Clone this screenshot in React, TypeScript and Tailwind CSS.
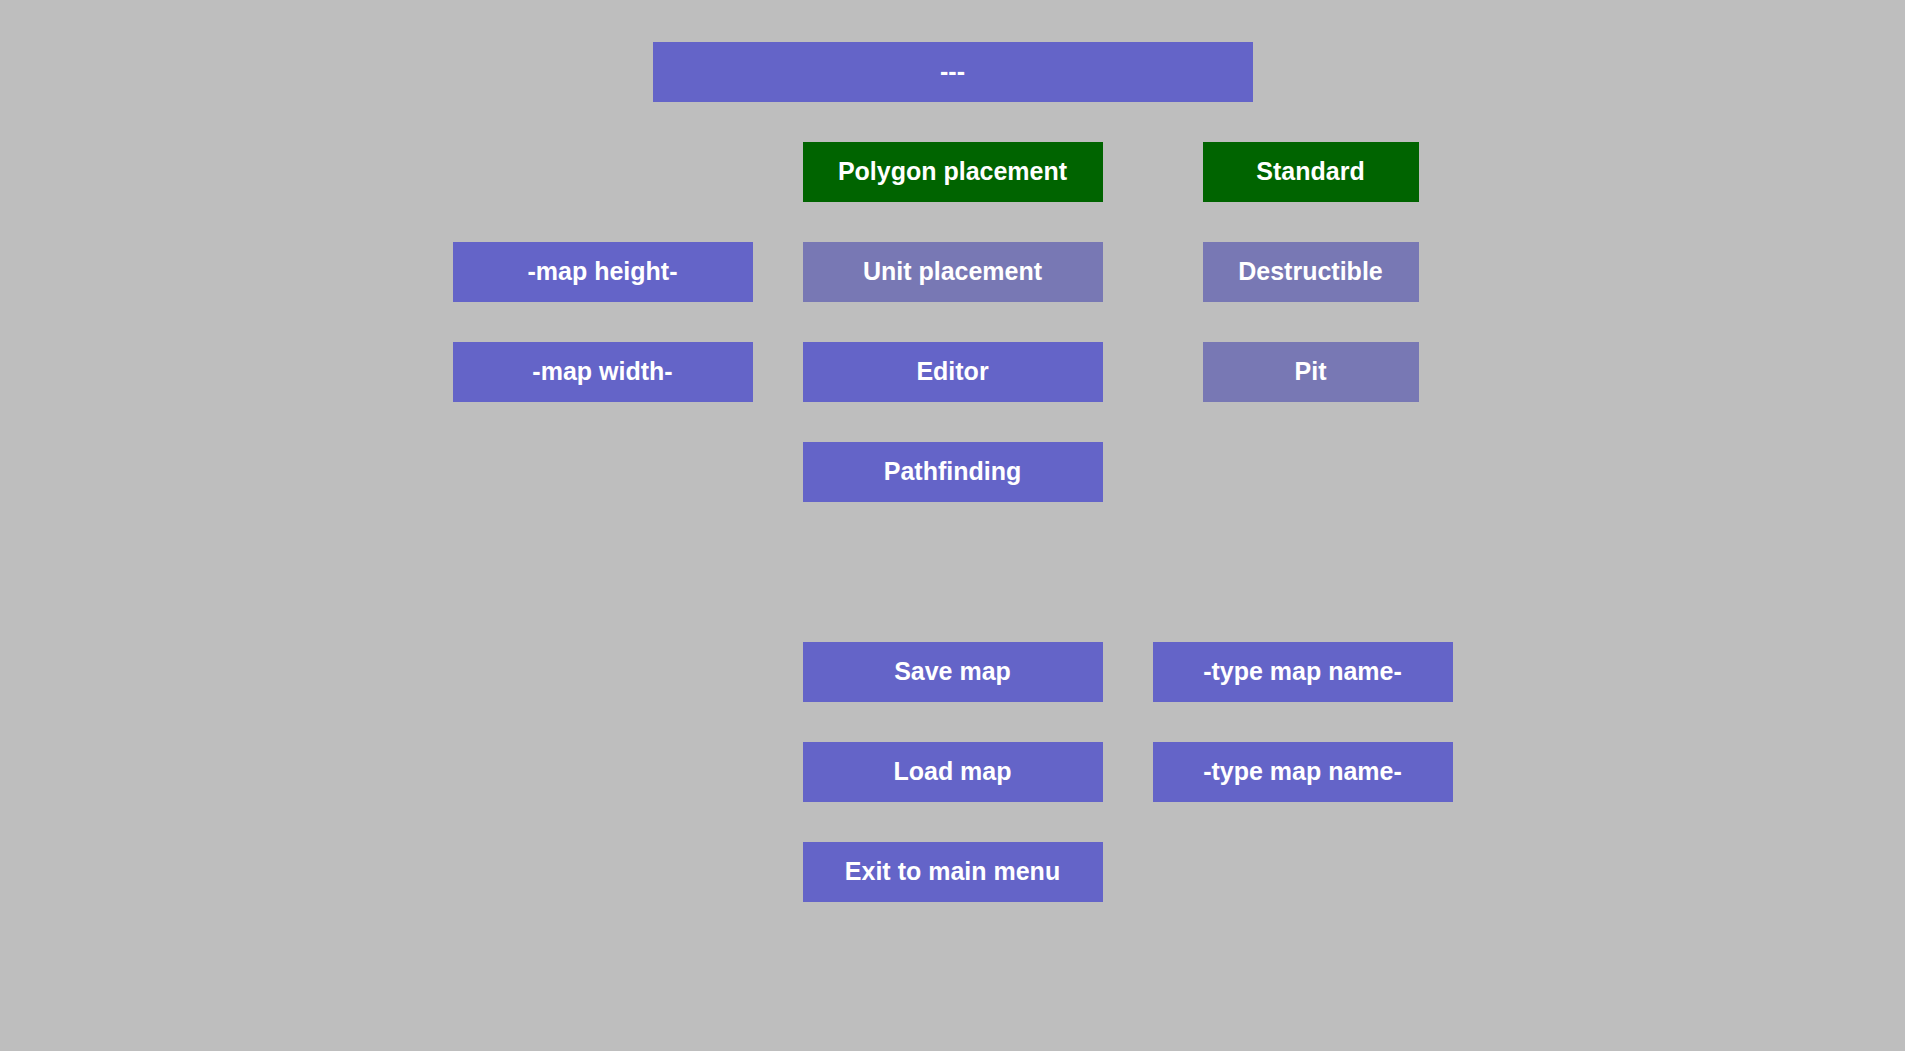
import { useState } from "react";
import type { ReactNode } from "react";

const base =
  "h-15 pb-0.5 text-center text-[25px] leading-8 font-bold text-white [font-family:'Liberation_Sans',Arial,sans-serif]";

function ActionButton({ children }: { children: ReactNode }) {
  return (
    <button type="button" className={`${base} w-full bg-[#6464c8]`}>
      {children}
    </button>
  );
}

function ModeButton({
  active,
  onSelect,
  children,
}: {
  active: boolean;
  onSelect: () => void;
  children: ReactNode;
}) {
  return (
    <button
      type="button"
      aria-pressed={active}
      onClick={onSelect}
      className={`${base} w-full ${active ? "bg-[#006400]" : "bg-[#7878b4]"}`}
    >
      {children}
    </button>
  );
}

function TextField({ label, placeholder }: { label: string; placeholder: string }) {
  return (
    <input
      type="text"
      aria-label={label}
      placeholder={placeholder}
      className={`${base} w-full bg-[#6464c8] outline-none placeholder:text-white placeholder:opacity-100`}
    />
  );
}

const placements = ["Polygon placement", "Unit placement"];
const kinds = ["Standard", "Destructible", "Pit"];

export default function App() {
  const [placement, setPlacement] = useState(placements[0]);
  const [kind, setKind] = useState(kinds[0]);

  return (
    <main className="flex min-h-screen flex-col items-center gap-10 bg-[#bebebe] py-[42px]">
      <output className={`${base} flex w-full max-w-[600px] items-center justify-center bg-[#6464c8]`}>
        ---
      </output>

      <div className="grid w-full max-w-[1000px] grid-cols-3 gap-x-[50px]">
        <div className="flex flex-col gap-10 pt-25">
          <TextField label="Map height" placeholder="-map height-" />
          <TextField label="Map width" placeholder="-map width-" />
        </div>

        <div className="flex flex-col gap-10">
          {placements.map((name) => (
            <ModeButton key={name} active={placement === name} onSelect={() => setPlacement(name)}>
              {name}
            </ModeButton>
          ))}
          <ActionButton>Editor</ActionButton>
          <ActionButton>Pathfinding</ActionButton>
        </div>

        <div className="ml-[50px] flex max-w-54 flex-col gap-10">
          {kinds.map((name) => (
            <ModeButton key={name} active={kind === name} onSelect={() => setKind(name)}>
              {name}
            </ModeButton>
          ))}
        </div>
      </div>

      <div className="mt-25 grid w-full max-w-[1000px] grid-cols-3 gap-x-[50px]">
        <div className="col-start-2 flex flex-col gap-10">
          <ActionButton>Save map</ActionButton>
          <ActionButton>Load map</ActionButton>
          <ActionButton>Exit to main menu</ActionButton>
        </div>
        <div className="flex flex-col gap-10">
          <TextField label="Name of the map to save" placeholder="-type map name-" />
          <TextField label="Name of the map to load" placeholder="-type map name-" />
        </div>
      </div>
    </main>
  );
}
